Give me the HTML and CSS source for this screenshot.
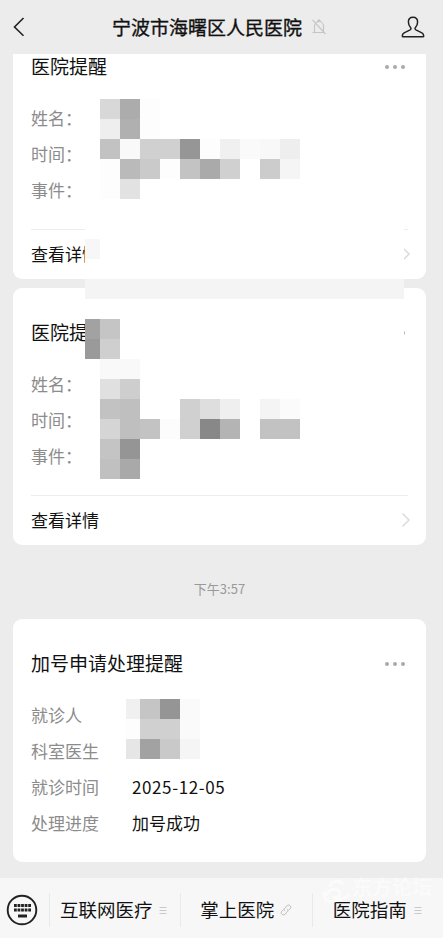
FILE: index.html
```html
<!DOCTYPE html>
<html lang="zh-CN">
<head>
<meta charset="utf-8">
<title>宁波市海曙区人民医院</title>
<link rel="stylesheet" href="styles.css">
</head>
<body>
<div class="app">
  <header class="header">
    <svg class="back" width="14" height="22" viewBox="0 0 14 22"><path d="M11.500 2 2.500 11l9 8.800"/></svg>
    <h1 class="header-title">宁波市海曙区人民医院</h1>
    <svg class="bell" width="16" height="18" viewBox="0 0 16 18"><path d="M1.500 14.500h12M3.500 14V8a4.500 4.500 0 0 1 9 0v6M6.500 3.200 8 1.800l1.500 1.400M1.500 1.800l13 14.200"/></svg>
    <svg class="person" width="24" height="24" viewBox="0 0 24 24"><path d="M12 2.200c-3 0-4.600 2-4.600 4.800 0 2.500 1 4.300 2.300 5.700.6.8.3 1.700-.6 2.200l-6 2.900c-1.300.7-1.800 1.700-1.800 3.100 0 .5.200.8.800.8h19.800c.6 0 .8-.3.800-.8 0-1.400-.5-2.400-1.800-3.100l-6-2.900c-.9-.5-1.200-1.400-.6-2.200 1.300-1.400 2.300-3.200 2.300-5.700 0-2.800-1.600-4.800-4.600-4.800z"/></svg>
  </header>

  <main class="chat">
    <section class="card card-first">
      <div class="card-head"><h2>医院提醒</h2><span class="dots"><i></i><i></i><i></i></span></div>
      <dl class="rows"><dt>姓名：</dt><dt>时间：</dt><dt>事件：</dt></dl>
      <div class="card-link"><span>查看详情</span><svg class="chevron" width="10" height="16" viewBox="0 0 10 16"><path d="m1.500 1.500 6.500 6.500-6.500 6.500"/></svg></div>
    </section>
    <section class="card">
      <div class="card-head"><h2>医院提醒</h2><span class="dots"><i></i><i></i><i></i></span></div>
      <dl class="rows"><dt>姓名：</dt><dt>时间：</dt><dt>事件：</dt></dl>
      <div class="card-link"><span>查看详情</span><svg class="chevron" width="10" height="16" viewBox="0 0 10 16"><path d="m1.500 1.500 6.500 6.500-6.500 6.500"/></svg></div>
    </section>
    <time class="stamp">下午3:57</time>
    <section class="card card-last">
      <div class="card-head"><h2>加号申请处理提醒</h2><span class="dots"><i></i><i></i><i></i></span></div>
      <dl class="rows">
        <dt>就诊人</dt><dd></dd>
        <dt>科室医生</dt><dd></dd>
        <dt>就诊时间</dt><dd class="date">2025-12-05</dd>
        <dt>处理进度</dt><dd>加号成功</dd>
      </dl>
    </section>
  </main>

  <footer class="menu">
    <div class="keyboard">
      <svg width="32" height="32" viewBox="0 0 32 32"><circle cx="16" cy="16" r="14.300"/><path d="M8 11.500h17M8 16h17" stroke-dasharray="2.800 .75"/><path d="M12 22h9"/></svg>
    </div>
    <div class="item"><span>互联网医疗</span><svg class="bars" width="8" height="9" viewBox="0 0 8 9"><path d="M.5 1.500h7M.5 4.500h7M.5 7.500h7"/></svg></div>
    <div class="item item-mid"><span>掌上医院</span><svg class="link" width="12" height="12" viewBox="0 0 12 12"><path d="M5 7.200c-1.300-1-1.200-2.300-.3-3.200L7 1.800c1-.9 2.300-.9 3.200 0s.8 2.100 0 3L8.800 6.200M7 4.800c1.300 1 1.200 2.300.3 3.200L5 10.200c-1 .9-2.300.9-3.200 0s-.8-2.100 0-3l1.400-1.400"/></svg></div>
    <div class="item item-end"><span>医院指南</span><svg class="bars" width="8" height="9" viewBox="0 0 8 9"><path d="M.5 1.500h7M.5 4.500h7M.5 7.500h7"/></svg></div>
  </footer>

  <svg class="mosaic" width="443" height="938" viewBox="0 0 443 938" shape-rendering="crispEdges">
    <!-- first card -->
    <g>
      <path fill="#d8d8d8" d="M100 99h20v20h-20z"/><path fill="#acacac" d="M120 99h20v20h-20z"/>
      <path fill="#eee" d="M100 119h20v20h-20z"/><path fill="#b0b0b0" d="M120 119h20v20h-20z"/>
      <path fill="#fdfdfd" d="M140 99h20v40h-20z"/>
      <path fill="#c2c2c2" d="M100 139h20v20h-20z"/><path fill="#f9f9f9" d="M120 139h20v20h-20z"/>
      <path fill="#d0d0d0" d="M140 139h40v20h-40z"/><path fill="#969696" d="M180 139h20v20h-20z"/>
      <path fill="#fdfdfd" d="M200 139h20v20h-20z"/><path fill="#f0f0f0" d="M220 139h20v20h-20z"/>
      <path fill="#fafafa" d="M240 139h20v20h-20z"/><path fill="#f8f8f8" d="M260 139h20v20h-20z"/>
      <path fill="#eee" d="M280 139h20v20h-20z"/>
      <path fill="#fdfdfd" d="M100 159h20v40h-20z"/><path fill="#bababa" d="M120 159h20v20h-20z"/>
      <path fill="#cacaca" d="M140 159h20v20h-20z"/><path fill="#fdfdfd" d="M160 159h20v20h-20z"/>
      <path fill="#c3c3c3" d="M180 159h20v20h-20z"/><path fill="#aaa" d="M200 159h20v20h-20z"/>
      <path fill="#d0d0d0" d="M220 159h20v20h-20z"/><path fill="#ccc" d="M260 159h20v20h-20z"/>
      <path fill="#f5f5f5" d="M280 159h20v20h-20z"/><path fill="#e2e2e2" d="M120 179h20v20h-20z"/>
    </g>
    <!-- strip between the first two cards -->
    <path fill="#fff" d="M85 229h319v130H85z"/>
    <path fill="#f7f7f7" d="M85 239h15v20H85z"/>
    <path fill="#f4f4f4" d="M85 279h319v20H85z"/>
    <!-- second card -->
    <g>
      <path fill="#a2a2a2" d="M85 319h15v20H85z"/><path fill="#c5c5c5" d="M100 319h20v20h-20z"/>
      <path fill="#9a9a9a" d="M85 339h15v20H85z"/><path fill="#cfcfcf" d="M100 339h20v20h-20z"/>
      <path fill="#f9f9f9" d="M100 359h40v20h-40z"/>
      <path fill="#e0e0e0" d="M100 379h20v20h-20z"/><path fill="#cecece" d="M120 379h20v20h-20z"/>
      <path fill="#c2c2c2" d="M100 399h20v20h-20z"/><path fill="#bfbfbf" d="M120 399h20v40h-20z"/>
      <path fill="#d5d5d5" d="M100 419h20v20h-20z"/><path fill="#c3c3c3" d="M140 419h20v20h-20z"/>
      <path fill="#fcfcfc" d="M160 419h20v20h-20z"/>
      <path fill="#c4c4c4" d="M100 439h20v20h-20z"/><path fill="#959595" d="M120 439h20v20h-20z"/>
      <path fill="#c0c0c0" d="M100 459h20v20h-20z"/><path fill="#a9a9a9" d="M120 459h20v20h-20z"/>
      <path fill="#d0d0d0" d="M180 399h20v40h-20z"/><path fill="#dedede" d="M200 399h20v20h-20z"/>
      <path fill="#efefef" d="M220 399h20v20h-20z"/><path fill="#888" d="M200 419h20v20h-20z"/>
      <path fill="#b4b4b4" d="M220 419h20v20h-20z"/><path fill="#f4f4f4" d="M260 399h20v20h-20z"/>
      <path fill="#fbfbfb" d="M280 399h20v20h-20z"/><path fill="#c2c2c2" d="M260 419h40v20h-40z"/>
    </g>
    <!-- third card -->
    <g>
      <path fill="#f0f0f0" d="M126 699h14v20h-14z"/><path fill="#c5c5c5" d="M140 699h20v20h-20z"/>
      <path fill="#959595" d="M160 699h20v20h-20z"/><path fill="#fafafa" d="M180 699h20v40h-20z"/>
      <path fill="#fdfdfd" d="M126 719h14v20h-14z"/><path fill="#d0d0d0" d="M140 719h40v20h-40z"/>
      <path fill="#e6e6e6" d="M126 739h14v20h-14z"/><path fill="#a2a2a2" d="M140 739h20v20h-20z"/>
      <path fill="#c9c9c9" d="M160 739h20v20h-20z"/><path fill="#f5f5f5" d="M180 739h20v20h-20z"/>
    </g>
  </svg>
  <div class="watermark">
    <svg width="30" height="28" viewBox="0 0 30 28"><path d="M8 10c1-7 11-8 13-2M4 19c2-7 9-9 13-5 3 4-2 8-6 6M3 15c-3 7 3 11 10 9s12-3 14-8"/></svg>
    <span>东方论坛</span>
  </div>
</div>
</body>
</html>
```

FILE: styles.css
```css
* { box-sizing: border-box; }

body, h1, h2, dl, dt, dd { margin: 0; }

body {
  background: #ececec;
  color: #111;
  font-family: "Noto Sans CJK SC", sans-serif;
}

svg { display: block; flex: none; fill: none; }

.app {
  position: relative;
  display: flex;
  flex-direction: column;
  width: 443px;
  height: 938px;
  overflow: hidden;
}

.header {
  display: flex;
  flex: none;
  align-items: center;
  height: 54px;
  padding: 0 18px 0 12px;
}
.back { stroke: #222; stroke-width: 1.6; }
.header-title {
  margin-left: 86px;
  font-size: 19px;
  font-weight: 400;
  line-height: 28px;
  white-space: nowrap;
  -webkit-text-stroke: 0.35px #111;
}
.bell { margin-left: 9px; stroke: #c5c5c5; stroke-width: 1.2; }
.person { margin-left: auto; stroke: #222; stroke-width: 1.5; }

.chat {
  flex: none;
  height: 824px;
  padding: 0 17px 0 13px;
  overflow: hidden;
}

.card {
  height: 257px;
  margin-bottom: 9px;
  padding: 33px 18px 0;
  border-radius: 9px;
  background: #fff;
}
.card-first { margin-top: -32px; }
.card-last { height: 243px; }

.card-head {
  display: flex;
  align-items: center;
  justify-content: space-between;
  height: 24px;
}
.card-head h2 { font-size: 19px; font-weight: 400; line-height: 22px; margin-top: -2px; }
.dots { display: flex; gap: 4px; margin-right: 3px; }
.dots i { width: 4px; height: 4px; border-radius: 50%; background: #aaa; }

.rows {
  display: grid;
  grid-template-columns: 101px 1fr;
  grid-auto-rows: 36.3px;
  margin-top: 20.5px;
  font-size: 17px;
  line-height: 36.3px;
}
.rows dt { grid-column: 1; color: #8c8c8c; }
.rows dd { grid-column: 2; }
.date { letter-spacing: 0.6px; }

.card-link {
  display: flex;
  align-items: center;
  justify-content: space-between;
  height: 49px;
  margin-top: 20.5px;
  border-top: 1px solid #ededed;
  font-size: 17px;
  line-height: 24px;
}
.chevron { margin-right: -3px; stroke: #ddd; stroke-width: 1.6; }

.stamp {
  display: block;
  height: 65px;
  padding-top: 25px;
  color: #999;
  font-size: 13px;
  line-height: 20px;
  text-align: center;
}

.menu {
  display: flex;
  flex: none;
  align-items: center;
  height: 60px;
  padding-top: 4px;
  background: #f7f7f7;
}
.keyboard { width: 49px; padding-left: 6px; }
.keyboard svg { stroke: #222; stroke-width: 1.9; }
.keyboard path { stroke-width: 3; }
.item {
  display: flex;
  align-items: center;
  width: 131.5px;
  height: 34px;
  padding-left: 10px;
  border-left: 1px solid #e9e9e9;
  font-size: 18.5px;
  line-height: 22px;
  white-space: nowrap;
}
.item span { margin-top: -2px; }
.item-mid { padding-left: 19px; }
.item-end { padding-left: 20px; }
.bars { margin-left: 7px; stroke: #c9c9c9; stroke-width: 1; }
.link { margin-left: 6px; stroke: #bbb; stroke-width: 1; }

.mosaic { position: absolute; top: 0; left: 0; }

.watermark {
  position: absolute;
  top: 877px;
  left: 322px;
  display: flex;
  align-items: flex-start;
  color: #fff;
  font-size: 20px;
  font-weight: 500;
  line-height: 20px;
  opacity: 0.55;
}
.watermark svg { stroke: #fff; stroke-width: 3; }
```
